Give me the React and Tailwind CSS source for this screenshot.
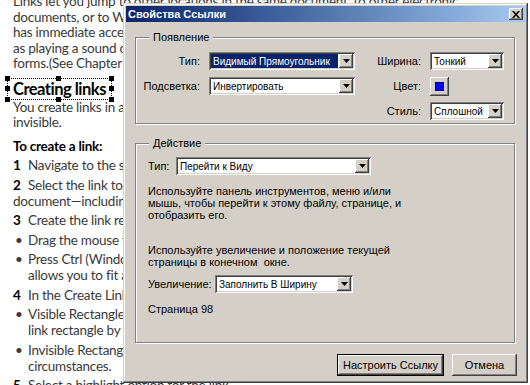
const raised =
  'shadow-[inset_-1px_-1px_0_#404040,inset_1px_1px_0_#ffffff,inset_-2px_-2px_0_#808080]'
const sunken =
  'shadow-[inset_1px_1px_0_#808080,inset_-1px_-1px_0_#ffffff,inset_2px_2px_0_#404040,inset_-2px_-2px_0_#d4d0c8]'

function Arrow() {
  return (
    <svg width="7" height="4" viewBox="0 0 7 4">
      <path d="M0 0h7L3.5 4z" fill="#000" />
    </svg>
  )
}

function Combo({ className, text, selected }) {
  return (
    <div className={`flex h-[18px] bg-white p-[2px] text-[10px] ${sunken} ${className}`}>
      <div
        className={`flex flex-1 items-center overflow-hidden whitespace-nowrap pl-[2px] mr-[1px] ${
          selected ? 'bg-[#0a246a] text-white' : ''
        }`}
      >
        {text}
      </div>
      <div className={`flex w-[14px] items-center justify-center bg-[#d4d0c8] ${raised}`}>
        <Arrow />
      </div>
    </div>
  )
}

function Handle({ className }) {
  return <span className={`absolute h-[5px] w-[5px] bg-black ${className}`} />
}

function Item({ mark, bold, children }) {
  return (
    <div className="mt-[3.5px] flex">
      <span className={`w-[15px] shrink-0 ${bold ? 'font-bold text-black' : 'pl-[2px]'}`}>{mark}</span>
      <div>{children}</div>
    </div>
  )
}

export default function App() {
  return (
    <div className="relative h-[385px] w-[530px] overflow-hidden bg-white">
      {/* document page behind the dialog */}
      <div className="whitespace-nowrap pl-[13px] font-['Lato',sans-serif] text-[13.5px] tracking-[-0.25px] text-[#3a3a3a]">
        <div className="mt-[-6px] leading-[15.5px]">
          <div>Links let you jump to other locations in the same document, to other electronic</div>
          <div>documents, or to Web sites. Links can also initiate actions or ensure that your reader</div>
          <div>has immediate access to related information. You can also add actions to links, such</div>
          <div>as playing a sound or movie file, running JavaScript, or submitting and resetting</div>
          <div>forms.(See Chapter 17, &quot;Adding Actions to Links and Bookmarks.&quot;)</div>
        </div>

        <div className="relative mt-[6px] ml-[-6px] inline-block border border-dotted border-black px-[5px] text-[16.5px] font-bold leading-[20px] tracking-[-0.5px] text-black">
          Creating links
          <Handle className="left-[-3px] top-[-3px]" />
          <Handle className="left-1/2 top-[-3px] -ml-[3px]" />
          <Handle className="right-[-3px] top-[-3px]" />
          <Handle className="left-[-3px] top-1/2 -mt-[3px]" />
          <Handle className="right-[-3px] top-1/2 -mt-[3px]" />
          <Handle className="bottom-[-3px] left-[-3px]" />
          <Handle className="bottom-[-3px] left-1/2 -ml-[3px]" />
          <Handle className="bottom-[-3px] right-[-3px]" />
        </div>

        <div className="leading-[15.5px]">
          <div>You create links in a couple of ways; links can be visible or</div>
          <div>invisible.</div>
        </div>

        <div className="mt-[7px] font-bold leading-[16px] text-black">To create a link:</div>

        <div className="leading-[16px]">
          <Item mark="1" bold>Navigate to the section of the document where you want the link.</Item>
          <Item mark="2" bold>
            <div>Select the link tool and move the pointer over the</div>
            <div className="-ml-[15px]">document—including the cursor changes to a crosshair.</div>
          </Item>
          <Item mark="3" bold>Create the link rectangle in one of these ways:</Item>
          <Item mark="•">Drag the mouse to create a marquee around the area.</Item>
          <Item mark="•">
            <div>Press Ctrl (Windows) or Option (Mac OS), which</div>
            <div>allows you to fit a rectangle around the text.</div>
          </Item>
          <Item mark="4" bold>In the Create Link dialog box, select an appearance:</Item>
          <Item mark="•">
            <div>Visible Rectangle creates a visible border around the</div>
            <div>link rectangle by default.</div>
          </Item>
          <Item mark="•">
            <div>Invisible Rectangle hides the link, useful in some</div>
            <div>circumstances.</div>
          </Item>
          <Item mark="5" bold>Select a highlight option for the link.</Item>
        </div>
      </div>

      {/* dialog window */}
      <div
        className={`absolute left-[123px] top-[3px] flex h-[380px] w-[405px] flex-col bg-[#d4d0c8] p-[3px] font-['Liberation_Sans',Arial,sans-serif] text-[11px] text-black shadow-[inset_-1px_-1px_0_#404040,inset_1px_1px_0_#d4d0c8,inset_-2px_-2px_0_#808080,inset_2px_2px_0_#ffffff]`}
      >
        <div className="flex h-[16px] items-center bg-gradient-to-r from-[#0a246a] to-[#a6caf0] pl-[2px] pr-[2px]">
          <span className="flex-1 font-bold text-white">Свойства Ссылки</span>
          <div className={`flex h-[12px] w-[14px] items-center justify-center bg-[#d4d0c8] ${raised}`}>
            <svg width="8" height="7" viewBox="0 0 8 7">
              <path d="M0 0h2l2 2.5L6 0h2L5 3.5 8 7H6L4 4.5 2 7H0l3-3.5z" fill="#000" />
            </svg>
          </div>
        </div>

        {/* Появление */}
        <fieldset className="mt-[9px] ml-[9px] w-[380px] border border-[#808080] shadow-[inset_1px_1px_0_#ffffff,1px_1px_0_#ffffff] pb-[3px]">
          <legend className="ml-[13px] bg-[#d4d0c8] px-[4px] leading-[12px]">Появление</legend>
          <div className="mt-[9px] grid grid-cols-[64px_146px_57px_74px] grid-rows-[18px_18px_18px] gap-x-[9px] gap-y-[7px]">
            <div className="self-center text-right">Тип:</div>
            <Combo text="Видимый Прямоугольник" selected />
            <div className="self-center text-right">Ширина:</div>
            <Combo text="Тонкий" />

            <div className="self-center text-right">Подсветка:</div>
            <Combo text="Инвертировать" />
            <div className="self-center text-right">Цвет:</div>
            <div className={`flex h-[19px] w-[19px] items-center justify-center bg-[#d4d0c8] ${raised}`}>
              <div className="h-[9px] w-[9px] border border-[#000080] bg-[#0000ff]" />
            </div>

            <div />
            <div />
            <div className="self-center text-right">Стиль:</div>
            <Combo text="Сплошной" />
          </div>
        </fieldset>

        {/* Действие */}
        <fieldset className="mt-[13px] ml-[9px] h-[206px] w-[380px] border border-[#808080] pl-[12px] shadow-[inset_1px_1px_0_#ffffff,1px_1px_0_#ffffff]">
          <legend className="ml-[1px] bg-[#d4d0c8] px-[4px] leading-[12px]">Действие</legend>
          <div className="mt-[8px] flex items-center">
            <span className="w-[28px]">Тип:</span>
            <Combo className="w-[195px]" text="Перейти к Виду" />
          </div>
          <div className="mt-[10px] leading-[12px]">
            <div>Используйте панель инструментов, меню и/или</div>
            <div>мышь, чтобы перейти к этому файлу, странице, и</div>
            <div>отобразить его.</div>
          </div>
          <div className="mt-[23px] leading-[12px]">
            <div>Используйте увеличение и положение текущей</div>
            <div>страницы в конечном&nbsp; окне.</div>
          </div>
          <div className="mt-[7px] flex items-center">
            <span className="w-[67px]">Увеличение:</span>
            <Combo className="w-[138px]" text="Заполнить В Ширину" />
          </div>
          <div className="mt-[10px] leading-[12px]">Страница 98</div>
        </fieldset>

        <div className="mt-auto mb-[4px] mr-[8px] flex justify-end gap-[8px]">
          <div className="border border-black">
            <button className={`h-[20px] w-[105px] bg-[#d4d0c8] ${raised}`}>Настроить Ссылку</button>
          </div>
          <button className={`h-[22px] w-[65px] bg-[#d4d0c8] ${raised}`}>Отмена</button>
        </div>
      </div>
    </div>
  )
}
